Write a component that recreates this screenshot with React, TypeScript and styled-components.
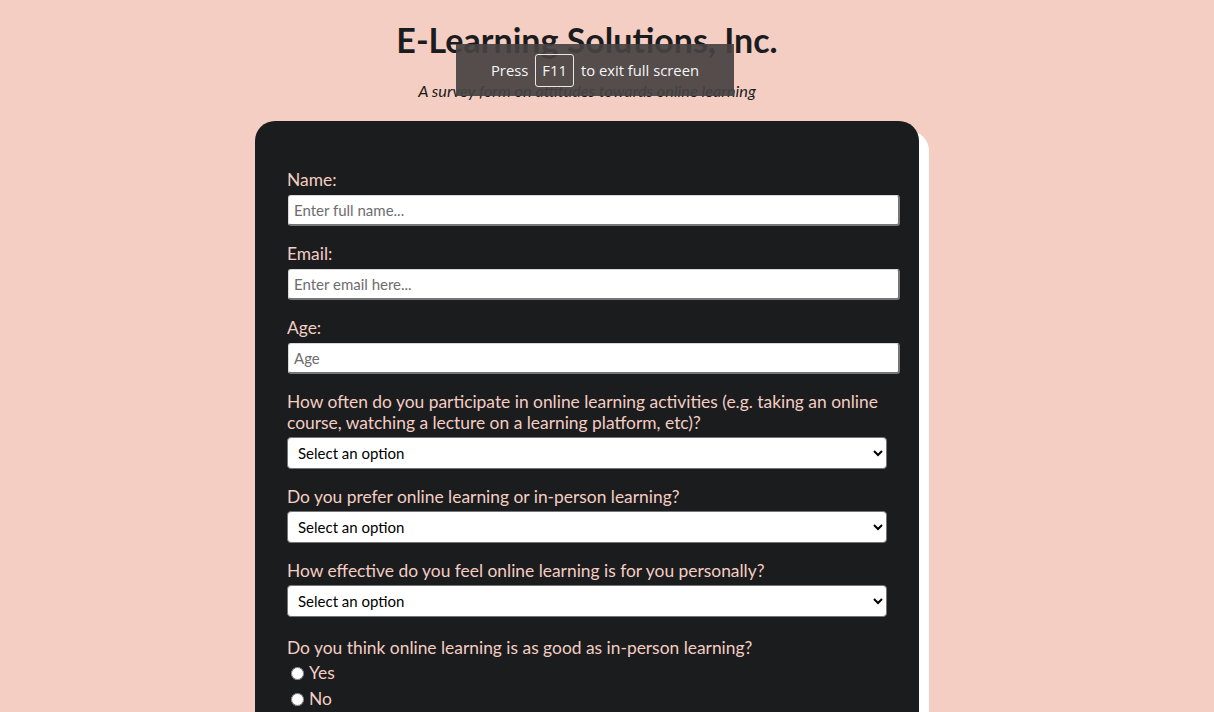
import React from "react";
import styled, { createGlobalStyle } from "styled-components";

const GlobalStyle = createGlobalStyle`
  html, body {
    margin: 0;
    padding: 0;
    background: #f4cec3;
  }
  body {
    font-family: Lato, "Noto Sans", sans-serif;
    color: #1b1c1e;
  }
`;

const Page = styled.div`
  display: flex;
  flex-direction: column;
  align-items: center;
  padding: 20px 40px 40px 0;
  position: relative;
`;

const Title = styled.h1`
  margin: 0;
  font-size: 34px;
  line-height: 40px;
  font-weight: 700;
  color: #1b1c1e;
  text-align: center;
`;

const Subtitle = styled.p`
  margin: 21px 0 0;
  font-size: 16.3px;
  line-height: 20px;
  font-style: italic;
  color: #1b1c1e;
  text-align: center;
`;

const Card = styled.form`
  margin-top: 20px;
  width: 664px;
  box-sizing: border-box;
  padding: 48px 32px 40px;
  background: #1b1c1e;
  border-radius: 20px;
  box-shadow: 10px 10px 0 #ffffff;
  display: flex;
  flex-direction: column;
  gap: 17px;
`;

const Group = styled.div`
  display: flex;
  flex-direction: column;
  align-items: flex-start;
`;

const RadioGroup = styled(Group)`
  margin-top: 3px;
`;

const Label = styled.label<{ $space?: number }>`
  display: block;
  font-size: 17.4px;
  line-height: 21px;
  color: #f4cec3;
  margin-bottom: ${(p) => (p.$space ?? 5)}px;
`;

const TextInput = styled.input`
  box-sizing: border-box;
  width: 612px;
  height: 31px;
  margin-left: 1px;
  padding: 0 5px;
  font-family: inherit;
  font-size: 15px;
  color: #1b1c1e;
  background: #ffffff;
  border-style: solid;
  border-color: #d8d8d8 #767676 #767676 #d8d8d8;
  border-width: 1px 2px 2px 1px;
  border-radius: 3px;
  &::placeholder {
    color: #6d6d6d;
  }
`;

const Select = styled.select`
  box-sizing: border-box;
  width: 600px;
  height: 32px;
  padding: 0 6px;
  font-family: inherit;
  font-size: 15px;
  color: #000000;
  background: #ffffff;
  border: 1px solid #767676;
  border-radius: 4px;
`;

const RadioRow = styled.label`
  display: flex;
  align-items: center;
  gap: 5px;
  font-size: 17.4px;
  line-height: 26px;
  color: #f4cec3;
  padding-left: 4px;
`;

const Radio = styled.input`
  margin: 0;
  width: 13px;
  height: 13px;
`;

const Toast = styled.div`
  position: absolute;
  top: 44px;
  left: 456px;
  width: 278px;
  height: 52px;
  box-sizing: border-box;
  background: rgba(70, 66, 66, 0.92);
  display: flex;
  align-items: center;
  justify-content: center;
  gap: 7px;
  font-family: "Open Sans", "Noto Sans", sans-serif;
  font-size: 14.8px;
  color: #f6f6f6;
`;

const Key = styled.span`
  display: inline-flex;
  align-items: center;
  justify-content: center;
  height: 33px;
  padding: 0 6px;
  box-sizing: border-box;
  border: 1px solid #e8e8e8;
  border-radius: 3px;
`;

const Button = styled.button`
  align-self: flex-start;
  font-family: inherit;
  font-size: 17px;
  padding: 8px 20px;
  border-radius: 6px;
  border: none;
  background: #f4cec3;
  color: #1b1c1e;
`;

const options = ["Select an option"];

const selectQuestions = [
  "How often do you participate in online learning activities (e.g. taking an online course, watching a lecture on a learning platform, etc)?",
  "Do you prefer online learning or in-person learning?",
  "How effective do you feel online learning is for you personally?",
];

export default function App() {
  return (
    <>
      <GlobalStyle />
      <Page>
        <Title>E-Learning Solutions, Inc.</Title>
        <Subtitle>A survey form on attitudes towards online learning</Subtitle>
        <Toast>
          Press <Key>F11</Key> to exit full screen
        </Toast>
        <Card onSubmit={(e) => e.preventDefault()}>
          <Group>
            <Label htmlFor="name">Name:</Label>
            <TextInput id="name" type="text" placeholder="Enter full name..." />
          </Group>
          <Group>
            <Label htmlFor="email">Email:</Label>
            <TextInput id="email" type="email" placeholder="Enter email here..." />
          </Group>
          <Group>
            <Label htmlFor="age">Age:</Label>
            <TextInput id="age" type="number" placeholder="Age" />
          </Group>
          {selectQuestions.map((q, i) => (
            <Group key={i}>
              <Label htmlFor={`q${i}`} $space={4}>
                {q}
              </Label>
              <Select id={`q${i}`} defaultValue="">
                {options.map((o) => (
                  <option key={o} value="">
                    {o}
                  </option>
                ))}
              </Select>
            </Group>
          ))}
          <RadioGroup>
            <Label $space={2}>Do you think online learning is as good as in-person learning?</Label>
            <RadioRow>
              <Radio type="radio" name="good" value="yes" /> Yes
            </RadioRow>
            <RadioRow>
              <Radio type="radio" name="good" value="no" /> No
            </RadioRow>
          </RadioGroup>
          <Button type="submit">Submit</Button>
        </Card>
      </Page>
    </>
  );
}
